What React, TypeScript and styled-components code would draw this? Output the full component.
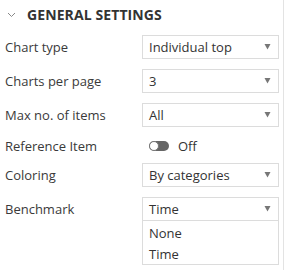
import styled, { createGlobalStyle } from "styled-components";

const GlobalStyle = createGlobalStyle`
  html, body {
    margin: 0;
    padding: 0;
    background: #ffffff;
  }
  body {
    font-family: "Open Sans", "Liberation Sans", sans-serif;
    color: #333333;
  }
`;

interface SelectRow {
  label: string;
  value: string;
}

const Chevron = () => (
  <svg width="9" height="6" viewBox="0 0 9 6">
    <path d="M1 1 L4.5 4.5 L8 1" fill="none" stroke="#888" strokeWidth="1" />
  </svg>
);

const Caret = () => (
  <svg width="7" height="6" viewBox="0 0 7 6">
    <path d="M0.5 0 H6.5 L3.5 5.5 Z" fill="#777" />
  </svg>
);

const SelectBox = ({ value }: { value: string }) => (
  <Select>
    <span>{value}</span>
    <Caret />
  </Select>
);

export default function App() {
  const topRows: SelectRow[] = [
    { label: "Chart type", value: "Individual top" },
    { label: "Charts per page", value: "3" },
    { label: "Max no. of items", value: "All" },
  ];

  return (
    <>
      <GlobalStyle />
      <Panel>
        <Header>
          <Chevron />
          <Title>GENERAL SETTINGS</Title>
        </Header>
        <Form>
          {topRows.map((row) => (
            <Row key={row.label}>
              <Label>{row.label}</Label>
              <SelectBox value={row.value} />
            </Row>
          ))}
          <Row $compact>
            <Label>Reference Item</Label>
            <ToggleWrap>
              <Toggle>
                <Knob />
              </Toggle>
              <ToggleText>Off</ToggleText>
            </ToggleWrap>
          </Row>
          <Row>
            <Label>Coloring</Label>
            <SelectBox value="By categories" />
          </Row>
          <Row>
            <Label>Benchmark</Label>
            <OpenSelect>
              <SelectBox value="Time" />
              <Menu>
                <MenuItem>None</MenuItem>
                <MenuItem>Time</MenuItem>
              </Menu>
            </OpenSelect>
          </Row>
        </Form>
      </Panel>
    </>
  );
}

const Panel = styled.div`
  width: 283px;
  height: 270px;
  border-right: 1px solid #e3e3e3;
  box-sizing: content-box;
`;

const Header = styled.div`
  display: flex;
  align-items: center;
  gap: 11px;
  height: 27px;
  padding-left: 7px;
  padding-top: 1px;
`;

const Title = styled.div`
  font-size: 14px;
  font-weight: 700;
  color: #333;
  letter-spacing: 0.1px;
`;

const Form = styled.div`
  display: flex;
  flex-direction: column;
  gap: 10px;
  padding-top: 7px;
`;

const Row = styled.div<{ $compact?: boolean }>`
  display: grid;
  grid-template-columns: 142px 137px;
  align-items: center;
  height: ${(p) => (p.$compact ? "16px" : "24px")};
`;

const Label = styled.div`
  font-size: 13px;
  padding-left: 5px;
  color: #3a3a3a;
`;

const Select = styled.div`
  box-sizing: border-box;
  height: 24px;
  border: 1px solid #dcdcdc;
  background: #fff;
  display: flex;
  align-items: center;
  justify-content: space-between;
  padding: 0 7px 0 6px;
  font-size: 13px;
  color: #333;
`;

const OpenSelect = styled.div`
  position: relative;
`;

const Menu = styled.div`
  position: absolute;
  left: 0;
  right: 0;
  top: 24px;
  background: #fff;
  border: 1px solid #dcdcdc;
  border-top: none;
  padding-top: 1px;
  z-index: 2;
`;

const MenuItem = styled.div`
  height: 21px;
  line-height: 22px;
  padding-left: 6px;
  font-size: 13px;
  color: #333;
`;

const ToggleWrap = styled.div`
  display: flex;
  align-items: center;
  gap: 9px;
  padding-left: 7px;
`;

const Toggle = styled.div`
  position: relative;
  width: 20px;
  height: 10px;
  border-radius: 5px;
  background: #666;
`;

const Knob = styled.div`
  position: absolute;
  left: 0;
  top: 0;
  width: 10px;
  height: 10px;
  box-sizing: border-box;
  border-radius: 50%;
  background: #fff;
  border: 1px solid #777;
`;

const ToggleText = styled.div`
  font-size: 13px;
  color: #333;
`;
